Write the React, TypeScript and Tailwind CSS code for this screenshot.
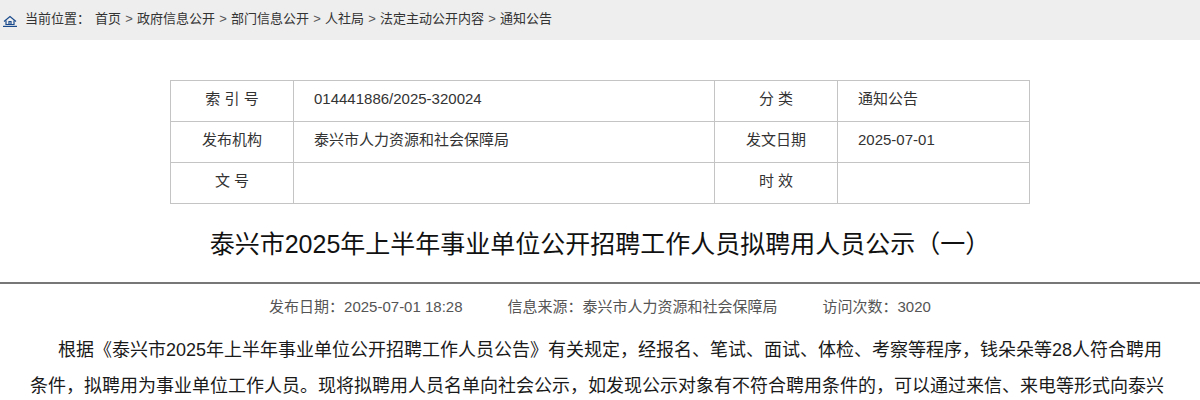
import React from 'react';

const crumbs = ['首页', '政府信息公开', '部门信息公开', '人社局', '法定主动公开内容', '通知公告'];

const rows = [
  { a: '索 引 号', b: '014441886/2025-320024', c: '分 类', d: '通知公告' },
  { a: '发布机构', b: '泰兴市人力资源和社会保障局', c: '发文日期', d: '2025-07-01' },
  { a: '文 号', b: '', c: '时 效', d: '' },
];

export default function App() {
  return (
    <div className="h-[400px] overflow-hidden bg-white font-['Liberation_Sans','Noto_Sans_CJK_SC',sans-serif]">
      <div className="flex h-10 items-center bg-[#eeeeee] pb-[3px] pl-[3px] text-[13px] text-[#333333]">
        <svg width="14" height="12" viewBox="0 0 14 12" fill="none" stroke="#1a4a8c" strokeWidth="1.2" className="mt-[5px]">
          <path d="M1 6.5 L7 1.5 L13 6.5" />
          <path d="M3 5.5 V9.5 H11 V5.5" />
          <path d="M6 9.5 V6.5 H8 V9.5" />
          <path d="M0 11.4 H14" />
        </svg>
        <span className="ml-2">当前位置：</span>
        <span className="ml-[5px] flex items-center">
          {crumbs.map((c, i) => (
            <span key={c} className="flex items-center">
              {i > 0 && <span className="mx-[4.2px] text-[#555555]">&gt;</span>}
              {c}
            </span>
          ))}
        </span>
      </div>

      <div className="mx-auto mt-10 w-[860px] border-t border-l border-[#c4c4c4] text-[15px] text-[#333333]">
        {rows.map((r) => (
          <div key={r.a} className="grid h-[41px] grid-cols-[123px_421px_123px_1fr] border-b border-[#c4c4c4]">
            <div className="flex items-center justify-center border-r border-[#c4c4c4] pb-1 whitespace-pre">{r.a}</div>
            <div className="flex items-center border-r border-[#c4c4c4] pb-1 pl-5">{r.b}</div>
            <div className="flex items-center justify-center border-r border-[#c4c4c4] pb-1 whitespace-pre">{r.c}</div>
            <div className="flex items-center border-r border-[#c4c4c4] pb-1 pl-5">{r.d}</div>
          </div>
        ))}
      </div>

      <h1 className="mt-[22px] h-[58px] border-b-2 border-[#777777] text-center text-[25px] leading-[36px] font-normal text-[#111111]">
        泰兴市2025年上半年事业单位公开招聘工作人员拟聘用人员公示（一）
      </h1>

      <div className="mt-[13px] flex justify-center gap-[45px] text-[15px] leading-[20px] text-[#555555]">
        <span>发布日期：2025-07-01 18:28</span>
        <span>信息来源：泰兴市人力资源和社会保障局</span>
        <span>访问次数：3020</span>
      </div>

      <div className="mx-[30px] mt-[15px] indent-[28px] text-lg leading-[36px] text-[#1a1a1a]">
        根据《泰兴市2025年上半年事业单位公开招聘工作人员公告》有关规定，经报名、笔试、面试、体检、考察等程序，钱朵朵等28人符合聘用条件，拟聘用为事业单位工作人员。现将拟聘用人员名单向社会公示，如发现公示对象有不符合聘用条件的，可以通过来信、来电等形式向泰兴
      </div>
    </div>
  );
}
